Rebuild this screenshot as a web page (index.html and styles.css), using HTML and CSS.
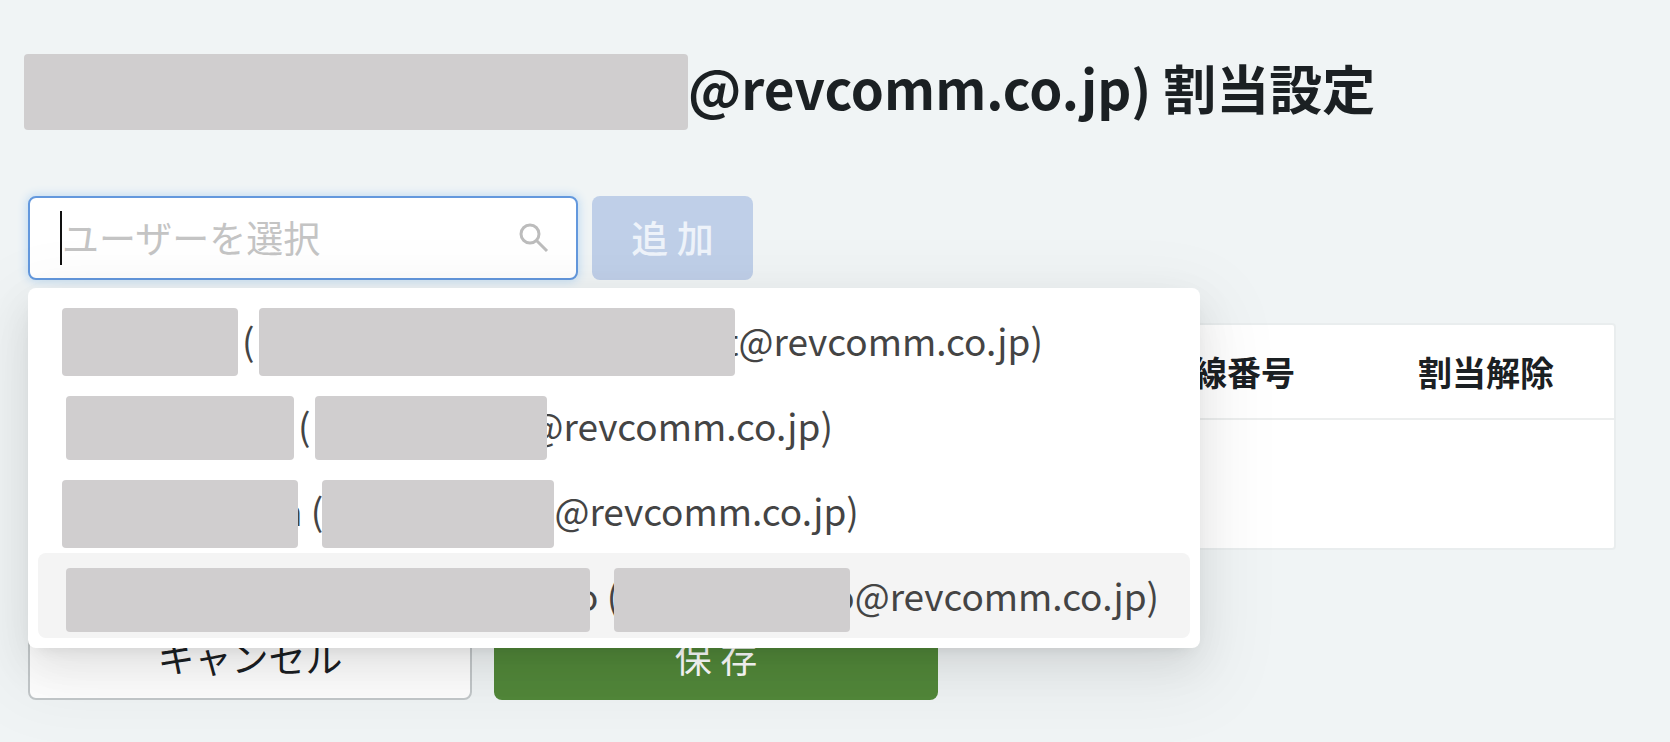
FILE: index.html
```html
<!DOCTYPE html>
<html lang="ja">
<head>
<meta charset="utf-8">
<meta name="viewport" content="width=device-width, initial-scale=1">
<title>割当設定</title>
<link rel="stylesheet" href="styles.css">
</head>
<body>
<main class="page">
  <h1 class="title"><span class="mask title-mask"></span><span>@revcomm.co.jp) 割当設定</span></h1>

  <form class="picker">
    <div class="select">
      <div class="field">
        <span class="caret"></span>
        <input class="field-input" type="text" role="combobox" aria-label="ユーザーを選択" aria-expanded="true" aria-controls="users" placeholder="ユーザーを選択">
        <svg class="field-icon" viewBox="0 0 32 32" aria-hidden="true"><circle cx="12" cy="12" r="9"/><path d="M18.5 18.5 29 29"/></svg>
      </div>
      <ul class="menu" id="users" role="listbox" aria-label="ユーザー">
        <li class="option option-1" role="option"><span class="mask name"></span><span class="paren">(</span><span class="mask mail"></span><span class="domain">t@revcomm.co.jp)</span></li>
        <li class="option option-2" role="option"><span class="mask name"></span><span class="paren">(</span><span class="mask mail"></span><span class="domain">@revcomm.co.jp)</span></li>
        <li class="option option-3" role="option"><span class="mask name"></span><span class="paren">n (</span><span class="mask mail"></span><span class="domain">@revcomm.co.jp)</span></li>
        <li class="option option-4 active" role="option" aria-selected="true"><span class="mask name"></span><span class="paren">o (</span><span class="mask mail"></span><span class="domain">o@revcomm.co.jp)</span></li>
      </ul>
    </div>
    <button class="button add" type="button" disabled>追 加</button>
  </form>

  <div class="card">
    <table class="table">
      <colgroup><col><col class="col-number"><col class="col-release"></colgroup>
      <thead><tr><th></th><th scope="col">内線番号</th><th scope="col">割当解除</th></tr></thead>
      <tbody><tr><td></td><td></td><td></td></tr></tbody>
    </table>
  </div>

  <div class="actions">
    <button class="button cancel" type="button">キャンセル</button>
    <button class="button save" type="button">保 存</button>
  </div>
</main>
</body>
</html>
```

FILE: styles.css
```css
* {
  box-sizing: border-box;
}

body {
  margin: 0;
  background: #f0f4f5;
  color: #1b2023;
  font-family: "Noto Sans CJK JP", "Noto Sans", sans-serif;
  font-size: 37px;
  line-height: 1.5;
}

.page {
  padding: 54px 54px 42px 28px;
}

.mask {
  flex: none;
  background: #d0cecf;
  border-radius: 4px;
}

.title {
  display: flex;
  align-items: flex-start;
  height: 76px;
  margin: 0 0 66px -4px;
  font-size: 53px;
  font-weight: 700;
  line-height: 66px;
  white-space: nowrap;
}

.title-mask {
  width: 664px;
  height: 76px;
}

.picker {
  display: flex;
  gap: 14px;
  margin-bottom: 43px;
}

.select {
  position: relative;
  width: 550px;
}

.field {
  display: flex;
  align-items: center;
  height: 84px;
  padding: 0 26px 0 30px;
  background: #fff;
  border: 2px solid #6398dd;
  border-radius: 8px;
  box-shadow: 0 0 8px 2px #c6def3;
}

.caret {
  flex: none;
  width: 2px;
  height: 54px;
  background: #111;
}

.field-input {
  flex: 1;
  min-width: 0;
  padding: 0;
  border: 0;
  outline: 0;
  background: none;
  color: inherit;
  font: inherit;
}

.field-input::placeholder {
  color: #c4c4c4;
  opacity: 1;
}

.field-icon {
  width: 32px;
  height: 32px;
  fill: none;
  stroke: #bcbcbc;
  stroke-width: 3;
}

.menu {
  position: absolute;
  z-index: 2;
  top: 92px;
  left: 0;
  width: 1172px;
  margin: 0;
  padding: 10px;
  list-style: none;
  background: #fff;
  border-radius: 8px;
  box-shadow: 0 16px 42px rgba(0, 0, 0, 0.08), 0 8px 16px -10px rgba(0, 0, 0, 0.12), 0 24px 74px 20px rgba(0, 0, 0, 0.05);
}

.option {
  display: flex;
  align-items: center;
  height: 85px;
  padding: 0 24px;
  border-radius: 8px;
  color: #444;
  white-space: nowrap;
}

.option.active {
  background: #f4f4f4;
}

.option .mask {
  z-index: 1;
  height: 68px;
}

.option-1 .mask {
  margin-top: 3px;
}

.option-1 .name {
  width: 176px;
  margin-right: 4px;
}

.option-1 .mail {
  width: 476px;
  margin-left: 4px;
  margin-right: -10px;
}

.option-2,
.option-4 {
  padding-left: 28px;
}

.option-2 .mask,
.option-4 .mask {
  height: 64px;
}

.option-2 .mask {
  margin-top: 5px;
}

.option-2 .name {
  width: 228px;
  margin-right: 4px;
}

.option-2 .mail {
  width: 232px;
  margin-left: 4px;
  margin-right: -18px;
}

.option-3 .mask {
  margin-top: 7px;
}

.option-3 .name {
  width: 236px;
  margin-right: -18px;
}

.option-3 .mail {
  width: 232px;
  margin-left: -1px;
}

.option-4 .mask {
  margin-top: 9px;
}

.option-4 .name {
  width: 524px;
  margin-right: -14px;
}

.option-4 .mail {
  width: 236px;
  margin-left: -5px;
  margin-right: -18px;
}

.button {
  height: 84px;
  padding: 0;
  border: 2px solid transparent;
  border-radius: 8px;
  font: inherit;
}

.add {
  width: 161px;
  background: #bfcfe8;
  color: #eef3fa;
  font-weight: 500;
}

.card {
  margin-bottom: 66px;
  background: #fff;
  border: 2px solid #e9edee;
  border-radius: 4px;
}

.table {
  width: 100%;
  border-collapse: collapse;
  table-layout: fixed;
}

.col-number {
  width: 262px;
}

.col-release {
  width: 256px;
}

.table th {
  height: 94px;
  padding: 0;
  border-bottom: 2px solid #eceeee;
  font-size: 34px;
  font-weight: 700;
}

.table td {
  height: 129px;
  padding: 0;
}

.actions {
  display: flex;
  gap: 22px;
}

.actions .button {
  width: 444px;
}

.cancel {
  background: #fff;
  border-color: #c3c8ca;
  color: #1b2023;
}

.save {
  background: #52883a;
  color: #fff;
}
```
